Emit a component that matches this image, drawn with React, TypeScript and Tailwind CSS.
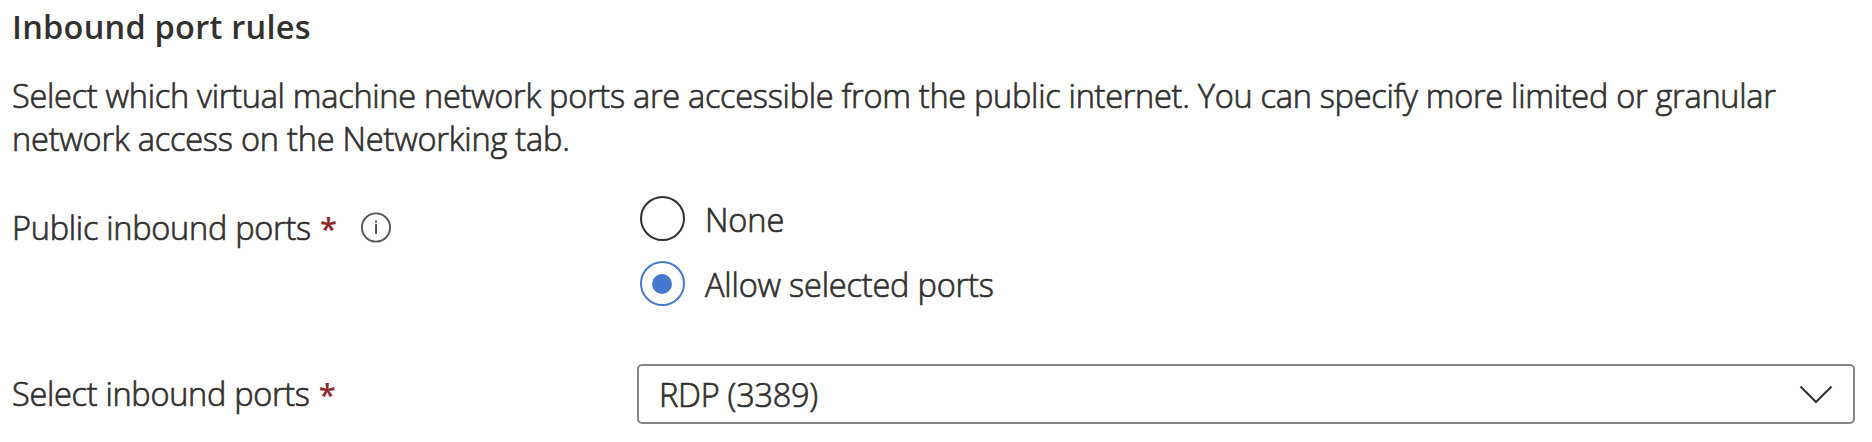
import { useState } from "react";

function RequiredMark() {
  return <span className="text-[31px] font-semibold text-[#8f2a2b] [-webkit-text-stroke:0]">*</span>;
}

function InfoIcon() {
  return (
    <svg className="mt-4 size-8" viewBox="0 0 32 32" aria-hidden="true">
      <circle cx="16" cy="15.5" r="14.1" fill="none" stroke="#565656" strokeWidth="1.9" />
      <rect x="15" y="8.6" width="2" height="2" fill="#484848" />
      <rect x="15.1" y="12.2" width="1.9" height="9.6" fill="#484848" />
    </svg>
  );
}

type RadioProps = { label: string; tracking: string; checked: boolean; onSelect: () => void };

function Radio({ label, tracking, checked, onSelect }: RadioProps) {
  return (
    <button type="button" role="radio" aria-checked={checked} onClick={onSelect} className="flex h-[45px] items-center gap-5">
      <span className={`flex size-[45px] items-center justify-center rounded-full border-2 ${checked ? "border-[#4678d0]" : "border-[#323130]"}`}>
        {checked && <span className="mr-px size-5 rounded-full bg-[#4678d0]" />}
      </span>
      <span className={`pt-[3px] ${tracking}`}>{label}</span>
    </button>
  );
}

export default function App() {
  const [port, setPort] = useState("allow");
  return (
    <main className="flex h-[442px] w-[1872px] flex-col bg-white pl-3 pr-[17px] pt-[5px] font-['Open_Sans','Noto_Sans',sans-serif] text-[32.5px] font-light text-[#323130] [-webkit-text-stroke:0.7px_currentColor]">
      <h1 className="h-11 font-semibold leading-[44px] tracking-[0.25px] [-webkit-text-stroke:0]">Inbound port rules</h1>
      <p className="mt-[25px] whitespace-nowrap leading-[43px]">
        <span className="block tracking-[-0.275px]">Select which virtual machine network ports are accessible from the public internet. You can specify more limited or granular</span>
        <span className="block tracking-[-0.2px]">network access on the Networking tab.</span>
      </p>
      <div className="mt-9 flex h-[110px] items-start">
        <div className="flex w-[628px] items-start">
          <div className="flex w-[348px] items-baseline gap-[9px] pt-[10px] leading-[44px]">
            <span className="tracking-[-0.27px]">Public inbound ports</span>
            <RequiredMark />
          </div>
          <InfoIcon />
        </div>
        <div role="radiogroup" className="flex flex-col gap-5">
          <Radio label="None" tracking="tracking-[-0.1px]" checked={port === "none"} onSelect={() => setPort("none")} />
          <Radio label="Allow selected ports" tracking="tracking-[-0.19px]" checked={port === "allow"} onSelect={() => setPort("allow")} />
        </div>
      </div>
      <div className="mt-[58px] flex h-[60px] items-center">
        <div className="flex w-[625px] items-baseline gap-[9px]">
          <span className="tracking-[-0.3px]">Select inbound ports</span>
          <RequiredMark />
        </div>
        <button type="button" className="flex h-[60px] flex-1 items-center justify-between rounded-[5px] border-2 border-[#868686] pl-5 pr-[20px]">
          <span className="pt-[2px] tracking-[-0.28px]">RDP (3389)</span>
          <svg className="h-5 w-[34px]" viewBox="0 0 34 20" fill="none" stroke="#323130" strokeWidth="2.1" aria-hidden="true">
            <path d="M1.5 2.5 17 18 32.5 2.5" />
          </svg>
        </button>
      </div>
    </main>
  );
}
